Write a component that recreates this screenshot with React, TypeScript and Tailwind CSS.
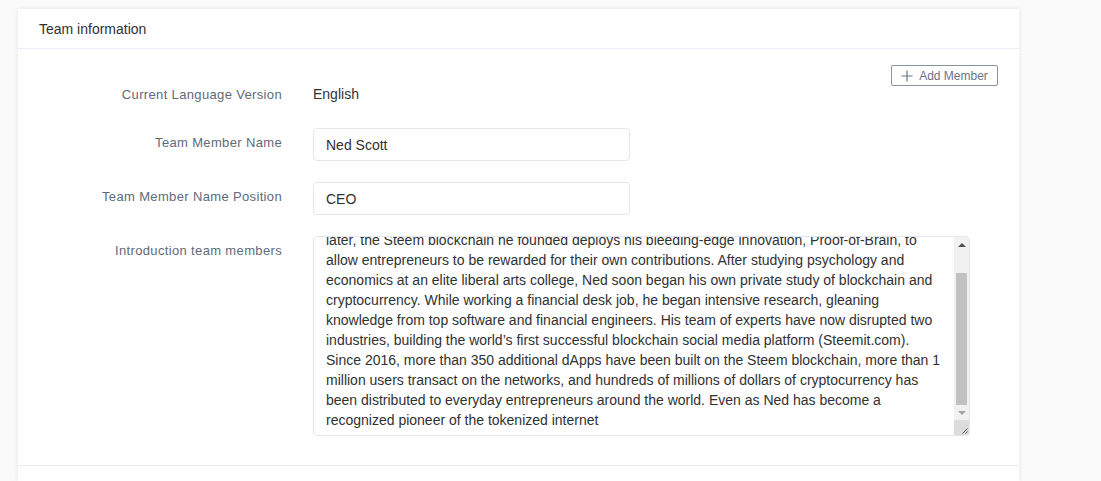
import React, { useEffect, useRef } from 'react'

const intro =
  "Ned Scott is the CEO and co-founder of Steemit, the first social media platform built on a blockchain. A serial entrepreneur with a passion for decentralized technology, he set out to reward people for the value they create online. Two years\n" +
  "later, the Steem blockchain he founded deploys his bleeding-edge innovation, Proof-of-Brain, to allow entrepreneurs to be rewarded for their own contributions. After studying psychology and economics at an elite liberal arts college, Ned soon began his own private study of blockchain and cryptocurrency. While working a financial desk job, he began intensive research, gleaning knowledge from top software and financial engineers. His team of experts have now disrupted two industries, building the world’s first successful blockchain social media platform (Steemit.com). Since 2016, more than 350 additional dApps have been built on the Steem blockchain, more than 1 million users transact on the networks, and hundreds of millions of dollars of cryptocurrency has been distributed to everyday entrepreneurs around the world. Even as Ned has become a recognized pioneer of the tokenized internet"

const labelCls = 'w-[264px] shrink-0 pt-[5px] text-right text-[13px] leading-5 tracking-[0.35px] text-[#606a7b]'

function FormRow({ label, children }: { label: string; children: React.ReactNode }) {
  return (
    <div className="mb-[21px] flex items-start">
      <div className={labelCls}>{label}</div>
      <div className="ml-[31px]">{children}</div>
    </div>
  )
}

export default function App() {
  const areaRef = useRef<HTMLTextAreaElement>(null)

  useEffect(() => {
    if (areaRef.current) areaRef.current.scrollTop = areaRef.current.scrollHeight
  }, [])

  return (
    <div className="min-h-[481px] bg-[#fafafa] pl-[18px] pt-[9px] font-['Liberation_Sans',Arial,sans-serif]">
      <div className="w-[1001px] bg-white shadow-[0_0_5px_rgba(0,0,0,0.09)]">
        <div className="flex h-10 items-center border-b border-[#ebeef5] pl-[21px] text-sm text-[#303133]">
          Team information
        </div>

        <div className="relative pt-[31px] pb-[29px]">
          <button className="absolute right-[21px] top-[16px] flex h-[21px] w-[107px] items-center justify-center gap-[6px] rounded-[2px] border border-[#8a91a1] text-xs text-[#6b7385]">
            <svg width="12" height="12" viewBox="0 0 12 12" fill="none" stroke="#6b7385" strokeWidth="1.2">
              <path d="M6 0.5v11M0.5 6h11" />
            </svg>
            Add Member
          </button>

          <div className="mb-[21px] flex min-h-[27px] items-start">
            <div className={labelCls}>Current Language Version</div>
            <div className="ml-[31px] pt-1 text-sm leading-5 text-[#303133]">English</div>
          </div>

          <FormRow label="Team Member Name">
            <input
              readOnly
              value="Ned Scott"
              className="h-[33px] w-[317px] rounded-[4px] border border-[#e4e7ed] px-3 text-sm text-[#303133] outline-none"
            />
          </FormRow>

          <FormRow label="Team Member Name Position">
            <input
              readOnly
              value="CEO"
              className="h-[33px] w-[317px] rounded-[4px] border border-[#e4e7ed] px-3 text-sm text-[#303133] outline-none"
            />
          </FormRow>

          <div className="flex items-start">
            <div className={labelCls}>Introduction team members</div>
            <div className="relative ml-[31px] h-[200px] w-[657px]">
              <textarea
                ref={areaRef}
                readOnly
                value={intro}
                className="block h-full w-full resize-none overflow-hidden rounded-[4px] border border-[#e4e7ed] py-[5px] pl-3 pr-[27px] text-sm leading-5 text-[#303133] outline-none"
              />
              {/* classic scrollbar + resize corner */}
              <div className="pointer-events-none absolute bottom-px right-px top-px flex w-[15px] flex-col bg-[#f1f1f1]">
                <div className="flex h-[15px] items-center justify-center">
                  <span className="h-0 w-0 border-x-[4px] border-b-[4px] border-x-transparent border-b-[#505050]" />
                </div>
                <div className="flex flex-1 flex-col justify-end px-[2px]">
                  <div className="h-[132px] bg-[#c1c1c1]" />
                </div>
                <div className="flex h-[15px] items-center justify-center">
                  <span className="h-0 w-0 border-x-[4px] border-t-[4px] border-x-transparent border-t-[#a3a3a3]" />
                </div>
                <div className="h-[15px] bg-[#dcdcdc]">
                  <svg width="15" height="15" viewBox="0 0 15 15" stroke="#555" strokeWidth="1">
                    <path d="M13.5 8.5l-5 5M13.5 11.5l-2 2" />
                  </svg>
                </div>
              </div>
            </div>
          </div>
        </div>

        <div className="h-4 border-t border-[#ebebeb]" />
      </div>
    </div>
  )
}
